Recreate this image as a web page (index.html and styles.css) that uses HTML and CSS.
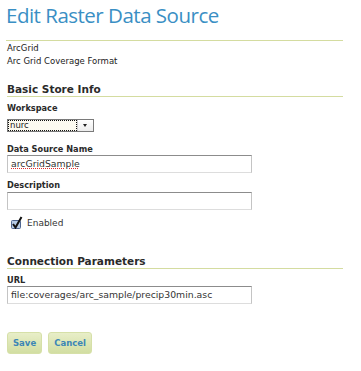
FILE: index.html
```html
<!DOCTYPE html>
<html lang="en">
<head>
  <meta charset="UTF-8">
  <title>Edit Raster Data Source</title>
  <link rel="stylesheet" href="styles.css">
</head>
<body>
<div class="page">
  <h1 class="title">Edit Raster Data Source</h1>

  <div class="format">
    <p>ArcGrid</p>
    <p>Arc Grid Coverage Format</p>
  </div>

  <h2 class="section">Basic Store Info</h2>

  <div class="field">
    <label>Workspace</label>
    <div class="select">
      <span class="select-value">nurc</span>
      <span class="select-arrow"></span>
    </div>
  </div>

  <div class="field field-name">
    <label>Data Source Name</label>
    <div class="input"><span class="spelling">arcGridSample</span></div>
  </div>

  <div class="field field-description">
    <label>Description</label>
    <div class="input"></div>
  </div>

  <div class="check">
    <svg class="checkbox" width="13" height="13" viewBox="0 0 13 13">
      <rect x="1.5" y="4.5" width="9" height="8" rx="1" fill="#b6cbe6" stroke="#4f6690"/>
      <path d="M3 8 L5.5 11.5 L11.5 1" fill="none" stroke="#111111" stroke-width="2"/>
    </svg>
    <span>Enabled</span>
  </div>

  <h2 class="section section-connection">Connection Parameters</h2>

  <div class="field">
    <label>URL</label>
    <div class="input">file:coverages/arc_sample/precip30min.asc</div>
  </div>

  <div class="buttons">
    <a class="button">Save</a>
    <a class="button">Cancel</a>
  </div>
</div>
</body>
</html>
```

FILE: styles.css
```css
body {
  margin: 0;
  font-family: 'DejaVu Sans', 'Liberation Sans', sans-serif;
  font-size: 8.5px;
  color: #222222;
  background: #ffffff;
}

.page {
  width: 336px;
  padding: 0 7px;
}

.title {
  margin: 0 0 0 -1px;
  padding: 1px 0 0;
  height: 39px;
  border-bottom: 1px solid #d4dca0;
  font-family: 'Open Sans', sans-serif;
  font-size: 20.5px;
  font-weight: normal;
  line-height: 28px;
  color: #3a8fc4;
  letter-spacing: -0.5px;
}

.format {
  padding-top: 1px;
}

.format p {
  margin: 0;
  line-height: 13px;
}

.section {
  margin: 14px 0 0;
  height: 14px;
  border-bottom: 1px solid #d4dca0;
  font-size: 10.5px;
  line-height: 14px;
  color: #2a2a2a;
}

.section-connection {
  margin-top: 25px;
}

.field {
  margin-top: 5px;
}

.field label {
  display: block;
  font-size: 8.2px;
  font-weight: bold;
  line-height: 12px;
  color: #2a2a2a;
}

.field-name {
  margin-top: 11px;
}

.field-description {
  margin-top: 6px;
}

.field-description .input {
  margin-top: 1px;
}

.select {
  display: flex;
  box-sizing: border-box;
  width: 87px;
  height: 13px;
  margin-top: 5px;
  border: 1px solid #7a7a7a;
  background: #fcfaf0;
}

.select-value {
  flex: 1;
  padding-left: 2px;
  line-height: 11px;
  outline: 1px dotted #111111;
  outline-offset: -1px;
}

.select-arrow {
  position: relative;
  width: 15px;
  border-left: 1px solid #d0d0d0;
  background: linear-gradient(#ffffff, #ececec);
}

.select-arrow::after {
  content: '';
  position: absolute;
  left: 5px;
  top: 4px;
  border-left: 2.5px solid transparent;
  border-right: 2.5px solid transparent;
  border-top: 3px solid #222222;
}

.input {
  box-sizing: border-box;
  width: 245px;
  height: 18px;
  padding: 0 3px;
  border: 1px solid #c4c4c4;
  border-top-color: #8c8c8c;
  border-bottom-color: #dddddd;
  font-size: 9.3px;
  line-height: 16px;
  color: #333333;
}

.spelling {
  text-decoration: underline dotted #e03030;
}

.check {
  display: flex;
  align-items: flex-end;
  gap: 4px;
  height: 13px;
  margin: 6px 0 0 3px;
  font-size: 9px;
  line-height: 11px;
  color: #333333;
}

.buttons {
  display: flex;
  gap: 6px;
  margin-top: 28px;
}

.button {
  box-sizing: border-box;
  height: 22px;
  padding: 0 5px;
  border: 1px solid #d6e0a8;
  border-radius: 3px;
  background: linear-gradient(#e8eec8, #d2dea2);
  font-weight: bold;
  line-height: 20px;
  color: #3c86b6;
}
```
